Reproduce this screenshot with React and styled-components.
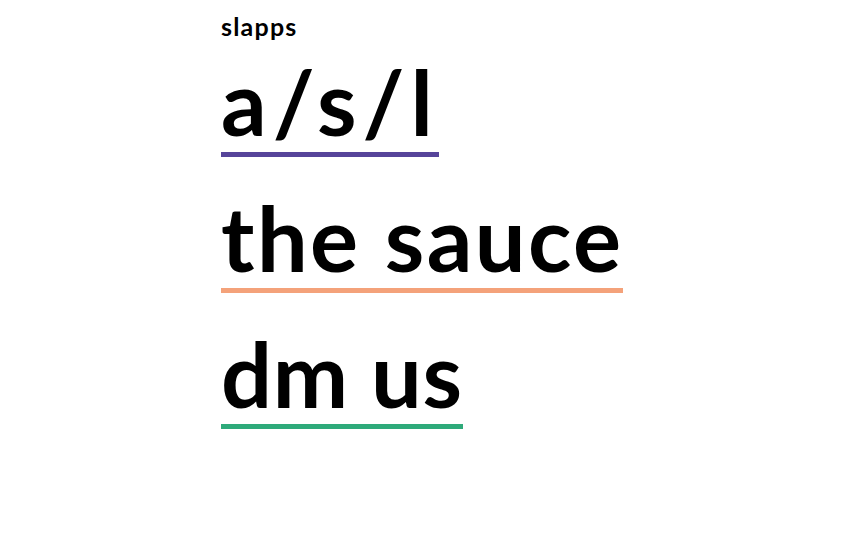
import React from "react";
import styled, { createGlobalStyle } from "styled-components";

const GlobalStyle = createGlobalStyle`
  body {
    margin: 0;
    background: #fff;
    font-family: "Lato", "DejaVu Sans", sans-serif;
    color: #000;
  }
`;

const Page = styled.main`
  width: 420px;
  margin: 0 auto;
  padding-top: 12px;
  display: flex;
  flex-direction: column;
  align-items: flex-start;
`;

const Brand = styled.h1`
  margin: 0;
  font-size: 25px;
  font-weight: 700;
  letter-spacing: 1.2px;
  line-height: 28px;
`;

const Menu = styled.nav`
  display: flex;
  flex-direction: column;
  align-items: flex-start;
  gap: 30px;
  margin-top: 11px;
`;

const MenuLink = styled.a`
  display: inline-block;
  font-size: 90px;
  font-weight: 700;
  line-height: 100px;
  letter-spacing: ${(p) => p.$tracking}px;
  color: #000;
  text-decoration: none;
  border-bottom: 5px solid ${(p) => p.$color};
  padding-bottom: 1px;
`;

const links = [
  { label: "a/s/l", color: "#56449a", tracking: 6 },
  { label: "the sauce", color: "#f4a27a", tracking: 2.4 },
  { label: "dm us", color: "#2eaa7a", tracking: 0.6 },
];

export default function App() {
  return (
    <>
      <GlobalStyle />
      <Page>
        <Brand>slapps</Brand>
        <Menu>
          {links.map((l) => (
            <MenuLink key={l.label} href="#" $color={l.color} $tracking={l.tracking}>
              {l.label}
            </MenuLink>
          ))}
        </Menu>
      </Page>
    </>
  );
}
